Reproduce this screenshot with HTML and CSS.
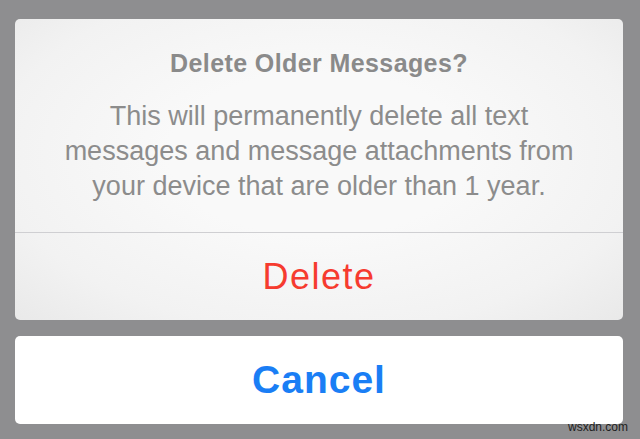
FILE: index.html
```html
<!DOCTYPE html>
<html lang="en">
<head>
  <meta charset="UTF-8">
  <meta name="viewport" content="width=device-width, initial-scale=1">
  <title>Delete Older Messages</title>
  <link rel="stylesheet" href="styles.css">
</head>
<body>
  <!-- Action sheet -->
  <div class="sheet">
    <div class="sheet-group">
      <div class="sheet-header">
        <h2 class="sheet-title">Delete Older Messages?</h2>
        <p class="sheet-message">This will permanently delete all text messages and message attachments from your device that are older than 1 year.</p>
      </div>
      <button class="sheet-button destructive">Delete</button>
    </div>
    <button class="sheet-button cancel">Cancel</button>
  </div>

  <span class="watermark">wsxdn.com</span>
</body>
</html>
```

FILE: styles.css
```css
/* Base Reset & Typography */
* { box-sizing: border-box; margin: 0; padding: 0; }
html, body { height: 100%; }
body {
  font-family: 'Liberation Sans', Arial, Helvetica, sans-serif;
  background: #8e8e90;
  padding: 19px 17px 0 15px;
  position: relative;
}

/* Action sheet */
.sheet {
  display: flex;
  flex-direction: column;
  gap: 16px;
}
.sheet-group {
  border-radius: 5px;
  overflow: hidden;
  background: radial-gradient(ellipse at 50% 45%, #f9f9f9 35%, #f2f2f2 75%, #e9e9e9 100%);
}
.sheet-header {
  padding: 29px 10px 28px;
  text-align: center;
  border-bottom: 1px solid #cfcfd2;
}
.sheet-title {
  font-size: 25px;
  line-height: 30px;
  font-weight: bold;
  letter-spacing: 0.4px;
  color: #8a8a8a;
  margin-bottom: 21px;
}
.sheet-message {
  max-width: 530px;
  margin: 0 auto;
  font-size: 27px;
  line-height: 35px;
  color: #8c8c8c;
}
.sheet-button {
  display: flex;
  align-items: center;
  justify-content: center;
  width: 100%;
  height: 87px;
  border: none;
  background: transparent;
  font-family: inherit;
  cursor: pointer;
}
.sheet-button.destructive {
  font-size: 36px;
  letter-spacing: 1.5px;
  color: #f63b2f;
}
.sheet-button.cancel {
  height: 88px;
  background: #fff;
  border-radius: 5px;
  font-size: 39px;
  font-weight: bold;
  letter-spacing: 1px;
  color: #1a7ef5;
}

.watermark {
  position: absolute;
  right: 12px;
  bottom: 5px;
  font-size: 12px;
  color: #1e1e1e;
}
```
